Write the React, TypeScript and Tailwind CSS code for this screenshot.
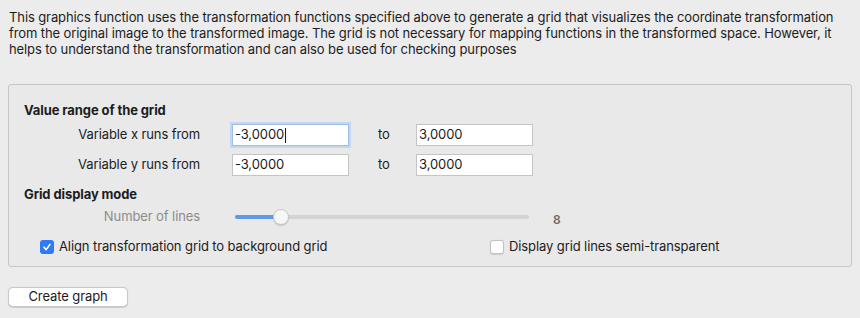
const FONT = "font-['Inter','Liberation_Sans',sans-serif] tracking-[-0.1px]";

function NumberField({ value, focused }: { value: string; focused?: boolean }) {
  return (
    <div
      className={`h-[22px] w-[117px] bg-white border flex items-center pl-[2px] text-[13px] text-[#1c1c1c] ${
        focused ? "border-[#9fbde6] ring-[2px] ring-[#c3d7f2]" : "border-[#c4c4c4]"
      }`}
    >
      {value}
      {focused && <span className="ml-[1px] h-[15px] w-px bg-[#1c1c1c]" />}
    </div>
  );
}

function RangeRow({ label, from, to, focused }: { label: string; from: string; to: string; focused?: boolean }) {
  return (
    <div className="flex items-center h-[22px]">
      <div className="w-[176px] text-right text-[13px] text-[#1c1c1c]">{label}</div>
      <div className="ml-[32px]">
        <NumberField value={from} focused={focused} />
      </div>
      <span className="ml-[29px] w-[38px] text-[13px] text-[#1c1c1c]">to</span>
      <NumberField value={to} />
    </div>
  );
}

function Checkbox({ checked, label }: { checked?: boolean; label: string }) {
  return (
    <div className="flex items-center">
      {checked ? (
        <div className="w-[14px] h-[14px] rounded-[3px] bg-[#2f7bf5] flex items-center justify-center">
          <svg width="10" height="10" viewBox="0 0 10 10">
            <path d="M2 5.2 L4.2 7.6 L8 2.4" fill="none" stroke="white" strokeWidth="1.6" strokeLinecap="round" strokeLinejoin="round" />
          </svg>
        </div>
      ) : (
        <div className="w-[14px] h-[14px] rounded-[3px] bg-white border border-[#c2c2c2] shadow-[0_0.5px_1px_rgba(0,0,0,0.12)]" />
      )}
      <span className="ml-[5px] text-[13px] text-[#1c1c1c]">{label}</span>
    </div>
  );
}

export default function App() {
  return (
    <div className={`w-[860px] h-[318px] bg-[#ececec] overflow-hidden ${FONT}`}>
      <p className="px-[9px] pt-[9px] text-[13px] leading-[16px] text-[#1c1c1c]">
        This graphics function uses the transformation functions specified above to generate a grid that visualizes the coordinate transformation
        from the original image to the transformed image. The grid is not necessary for mapping functions in the transformed space. However, it
        helps to understand the transformation and can also be used for checking purposes
      </p>

      {/* Gruppe */}
      <div className="mx-[8px] mt-[27px] h-[183px] border border-[#c6c6c6] rounded-[3px] bg-[#e9e9e9] pl-[15px] pt-[17px]">
        <div className="text-[13px] leading-[16px] font-bold text-[#1c1c1c]">Value range of the grid</div>
        <div className="mt-[6px] flex flex-col gap-[8px]">
          <RangeRow label="Variable x runs from" from="-3,0000" to="3,0000" focused />
          <RangeRow label="Variable y runs from" from="-3,0000" to="3,0000" />
        </div>

        <div className="mt-[10px] text-[13px] leading-[16px] font-bold text-[#1c1c1c]">Grid display mode</div>

        <div className="mt-[7px] flex items-center h-[16px]">
          <div className="w-[176px] text-right text-[13px] text-[#8c8c8c]">Number of lines</div>
          <div className="ml-[35px] relative w-[294px] h-[4px] rounded-full bg-[#d3d3d3]">
            <div className="h-full w-[46px] rounded-full bg-[#5f9ae9]" />
            <div className="absolute left-[38px] top-[-6px] w-[16px] h-[16px] rounded-full bg-[#f6f6f6] border border-[#c9c9c9] shadow-[0_1px_1px_rgba(0,0,0,0.15)]" />
          </div>
          <span className="ml-[24px] mt-[5px] text-[12px] font-semibold text-[#6a6a6a]">8</span>
        </div>

        <div className="mt-[12px] flex items-center">
          <div className="ml-[16px] w-[450px]">
            <Checkbox checked label="Align transformation grid to background grid" />
          </div>
          <Checkbox label="Display grid lines semi-transparent" />
        </div>
      </div>

      <button className="ml-[8px] mt-[20px] w-[120px] h-[20px] bg-white border border-[#c8c8c8] rounded-[5px] shadow-[0_0.5px_1px_rgba(0,0,0,0.15)] text-[13px] text-[#1c1c1c] flex items-center justify-center">
        Create graph
      </button>
    </div>
  );
}
